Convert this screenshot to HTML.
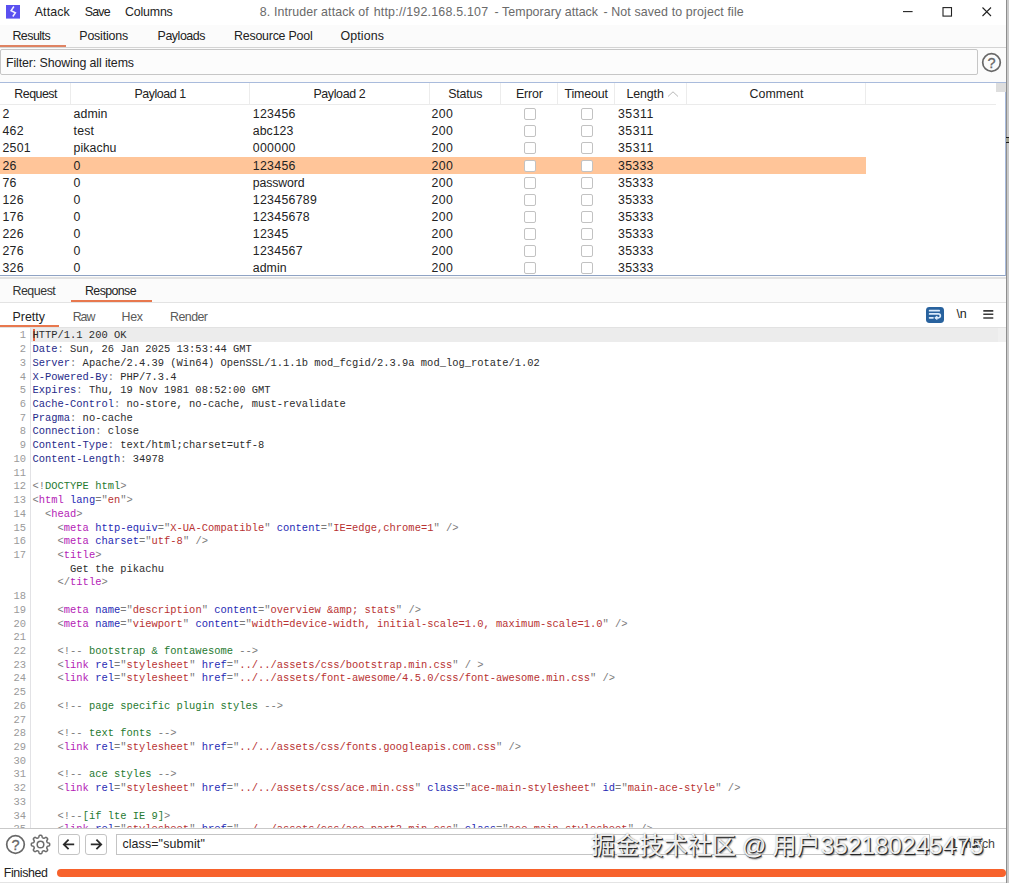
<!DOCTYPE html>
<html lang="en"><head><meta charset="utf-8"><title>Intruder attack</title><style>
html,body{margin:0;padding:0;background:#fff}
#root{position:relative;width:1009px;height:883px;overflow:hidden;background:#fff;font-family:"Liberation Sans",sans-serif}
.b{position:absolute;display:block}
.t{position:absolute;white-space:pre;font-family:"Liberation Sans","Noto Sans CJK SC",sans-serif}
.ln{position:absolute;left:0;width:26px;text-align:right;font:10.45px/13.75px "Liberation Mono",monospace;color:#9a9a9a}
.cl{position:absolute;left:32.5px;margin:0;font:10.45px/13.75px "Liberation Mono",monospace;color:#333;white-space:pre}
.hn{color:#1f2a8a}.p{color:#7a7a7a}.tx{color:#2c2c2c}.tg{color:#b422b6}.at{color:#1f2ab4}.av{color:#b83232}.cm{color:#1f7a30}
.wm{font-size:24px;line-height:30px;color:rgba(255,255,255,.93);text-shadow:1px 1px 0.6px rgba(20,20,20,.85),1.6px 1.6px 1.2px rgba(0,0,0,.4),0 0 1.5px rgba(60,60,60,.55);letter-spacing:.16px}
</style></head><body><div id="root">
<div class="b" style="left:0px;top:0px;width:1009px;height:25px;background:#fff"></div>
<div class="b" style="left:0px;top:25px;width:1009px;height:57px;background:#fbfbfb"></div>
<svg class="b" style="left:5.95px;top:5.05px" width="14" height="13.6" viewBox="0 0 14 13.6"><rect width="14" height="13.6" fill="#5a50f0"/><path d="M7.9 1.5 L5.1 5.6 L9.4 7.8 L6.8 11.5" fill="none" stroke="#f4f2ff" stroke-width="1.5" stroke-linejoin="miter"/></svg>
<div class="t" style="left:34.70px;top:3.94px;font-size:12.4px;line-height:16px;letter-spacing:0.124px;color:#222;">Attack</div>
<div class="t" style="left:84.70px;top:3.94px;font-size:12.4px;line-height:16px;letter-spacing:-0.741px;color:#222;">Save</div>
<div class="t" style="left:124.90px;top:3.94px;font-size:12.4px;line-height:16px;letter-spacing:-0.161px;color:#222;">Columns</div>
<div class="t" style="left:259.80px;top:3.94px;font-size:12.4px;line-height:16px;letter-spacing:0.113px;color:#6a6a6a;">8. Intruder attack of</div>
<div class="t" style="left:373.70px;top:3.94px;font-size:12.4px;line-height:16px;letter-spacing:0.219px;color:#6a6a6a;">http://192.168.5.107</div>
<div class="t" style="left:494.60px;top:3.94px;font-size:12.4px;line-height:16px;letter-spacing:0.064px;color:#6a6a6a;">- Temporary attack</div>
<div class="t" style="left:603.40px;top:3.94px;font-size:12.4px;line-height:16px;letter-spacing:0.124px;color:#6a6a6a;">- Not saved to project file</div>
<svg class="b" style="left:890px;top:0" width="116" height="25" viewBox="0 0 116 25"><g stroke="#222" stroke-width="1.1" fill="none"><path d="M13 11.6 H22.6"/><rect x="53" y="7.6" width="8.5" height="8.5"/><path d="M92.5 7.5 L101 16 M101 7.5 L92.5 16"/></g></svg>
<div class="t" style="left:12.40px;top:28.19px;font-size:12.4px;line-height:16px;letter-spacing:-0.493px;color:#222;">Results</div>
<div class="t" style="left:79.30px;top:28.19px;font-size:12.4px;line-height:16px;letter-spacing:-0.180px;color:#222;">Positions</div>
<div class="t" style="left:157.60px;top:28.19px;font-size:12.4px;line-height:16px;letter-spacing:-0.452px;color:#222;">Payloads</div>
<div class="t" style="left:234.00px;top:28.19px;font-size:12.4px;line-height:16px;letter-spacing:-0.218px;color:#222;">Resource Pool</div>
<div class="t" style="left:340.50px;top:28.19px;font-size:12.4px;line-height:16px;letter-spacing:0.109px;color:#222;">Options</div>
<div class="b" style="left:0px;top:47px;width:1009px;height:1px;background:#d4d4d4"></div>
<div class="b" style="left:0px;top:44.9px;width:65.6px;height:2.3px;background:#df8363"></div>
<div class="b" style="left:0px;top:49px;width:978px;height:26px;box-sizing:border-box;border:1px solid #c6c6c6;border-radius:2px;background:#fcfcfc"></div>
<div class="t" style="left:6.00px;top:55.04px;font-size:12.4px;line-height:16px;letter-spacing:-0.117px;color:#222;">Filter: Showing all items</div>
<svg class="b" style="left:981px;top:52px" width="21" height="21" viewBox="0 0 21 21"><circle cx="10.5" cy="10.5" r="8.8" fill="none" stroke="#686868" stroke-width="1.7"/><text x="10.6" y="15.6" font-size="14.5" font-family="Liberation Sans, sans-serif" text-anchor="middle" fill="#686868" stroke="#686868" stroke-width="0.3">?</text></svg>
<div class="b" style="left:0px;top:82px;width:1006px;height:194px;box-sizing:border-box;background:#fff;border:1px solid #a9bbdc;border-left:none;border-bottom-color:#8fa3c4"></div>
<div class="b" style="left:0px;top:104px;width:996px;height:1px;background:#ebebeb"></div>
<div class="b" style="left:70px;top:83px;width:1px;height:21px;background:#ececec"></div>
<div class="b" style="left:249px;top:83px;width:1px;height:21px;background:#ececec"></div>
<div class="b" style="left:428.5px;top:83px;width:1px;height:21px;background:#ececec"></div>
<div class="b" style="left:500px;top:83px;width:1px;height:21px;background:#ececec"></div>
<div class="b" style="left:557px;top:83px;width:1px;height:21px;background:#ececec"></div>
<div class="b" style="left:614px;top:83px;width:1px;height:21px;background:#ececec"></div>
<div class="b" style="left:686px;top:83px;width:1px;height:21px;background:#ececec"></div>
<div class="b" style="left:865px;top:83px;width:1px;height:21px;background:#ececec"></div>
<div class="t" style="left:14.30px;top:86.44px;font-size:12.4px;line-height:16px;letter-spacing:-0.498px;color:#222;">Request</div>
<div class="t" style="left:134.40px;top:86.44px;font-size:12.4px;line-height:16px;letter-spacing:-0.417px;color:#222;">Payload 1</div>
<div class="t" style="left:313.40px;top:86.44px;font-size:12.4px;line-height:16px;letter-spacing:-0.350px;color:#222;">Payload 2</div>
<div class="t" style="left:448.20px;top:86.44px;font-size:12.4px;line-height:16px;letter-spacing:-0.159px;color:#222;">Status</div>
<div class="t" style="left:516.00px;top:86.44px;font-size:12.4px;line-height:16px;letter-spacing:-0.171px;color:#222;">Error</div>
<div class="t" style="left:564.40px;top:86.44px;font-size:12.4px;line-height:16px;letter-spacing:-0.105px;color:#222;">Timeout</div>
<div class="t" style="left:626.60px;top:86.44px;font-size:12.4px;line-height:16px;letter-spacing:-0.138px;color:#222;">Length</div>
<div class="t" style="left:749.60px;top:86.44px;font-size:12.4px;line-height:16px;letter-spacing:0.022px;color:#222;">Comment</div>
<svg class="b" style="left:667px;top:90px" width="12" height="8" viewBox="0 0 12 8"><path d="M1 6.5 L6 1.8 L11 6.5" fill="none" stroke="#b8b8b8" stroke-width="1"/></svg>
<div class="b" style="left:996px;top:83px;width:9.5px;height:8.5px;background:#dedede"></div>
<div class="t" style="left:2.40px;top:106.24px;font-size:12.3px;line-height:16px;letter-spacing:0.000px;color:#222;letter-spacing:0.309px">2</div>
<div class="t" style="left:73.60px;top:106.24px;font-size:12.3px;line-height:16px;letter-spacing:0.000px;color:#222;letter-spacing:0.060px">admin</div>
<div class="t" style="left:252.80px;top:106.24px;font-size:12.3px;line-height:16px;letter-spacing:0.000px;color:#222;letter-spacing:0.309px">123456</div>
<div class="t" style="left:431.60px;top:106.24px;font-size:12.3px;line-height:16px;letter-spacing:0.000px;color:#222;letter-spacing:0.309px">200</div>
<div class="t" style="left:618.00px;top:106.24px;font-size:12.3px;line-height:16px;letter-spacing:0.000px;color:#222;letter-spacing:0.492px">35311</div>
<div class="b" style="left:524px;top:108.0px;width:12px;height:12px;box-sizing:border-box;border:1px solid #c2c2c2;border-radius:2px;background:#fff"></div>
<div class="b" style="left:581.3px;top:108.0px;width:12px;height:12px;box-sizing:border-box;border:1px solid #c2c2c2;border-radius:2px;background:#fff"></div>
<div class="t" style="left:2.40px;top:123.34px;font-size:12.3px;line-height:16px;letter-spacing:0.000px;color:#222;letter-spacing:0.309px">462</div>
<div class="t" style="left:73.60px;top:123.34px;font-size:12.3px;line-height:16px;letter-spacing:0.000px;color:#222;letter-spacing:0.144px">test</div>
<div class="t" style="left:252.80px;top:123.34px;font-size:12.3px;line-height:16px;letter-spacing:0.000px;color:#222;letter-spacing:0.024px">abc123</div>
<div class="t" style="left:431.60px;top:123.34px;font-size:12.3px;line-height:16px;letter-spacing:0.000px;color:#222;letter-spacing:0.309px">200</div>
<div class="t" style="left:618.00px;top:123.34px;font-size:12.3px;line-height:16px;letter-spacing:0.000px;color:#222;letter-spacing:0.492px">35311</div>
<div class="b" style="left:524px;top:125.0px;width:12px;height:12px;box-sizing:border-box;border:1px solid #c2c2c2;border-radius:2px;background:#fff"></div>
<div class="b" style="left:581.3px;top:125.0px;width:12px;height:12px;box-sizing:border-box;border:1px solid #c2c2c2;border-radius:2px;background:#fff"></div>
<div class="t" style="left:2.40px;top:140.44px;font-size:12.3px;line-height:16px;letter-spacing:0.000px;color:#222;letter-spacing:0.309px">2501</div>
<div class="t" style="left:73.60px;top:140.44px;font-size:12.3px;line-height:16px;letter-spacing:0.000px;color:#222;letter-spacing:0.072px">pikachu</div>
<div class="t" style="left:252.80px;top:140.44px;font-size:12.3px;line-height:16px;letter-spacing:0.000px;color:#222;letter-spacing:0.309px">000000</div>
<div class="t" style="left:431.60px;top:140.44px;font-size:12.3px;line-height:16px;letter-spacing:0.000px;color:#222;letter-spacing:0.309px">200</div>
<div class="t" style="left:618.00px;top:140.44px;font-size:12.3px;line-height:16px;letter-spacing:0.000px;color:#222;letter-spacing:0.492px">35311</div>
<div class="b" style="left:524px;top:142.0px;width:12px;height:12px;box-sizing:border-box;border:1px solid #c2c2c2;border-radius:2px;background:#fff"></div>
<div class="b" style="left:581.3px;top:142.0px;width:12px;height:12px;box-sizing:border-box;border:1px solid #c2c2c2;border-radius:2px;background:#fff"></div>
<div class="b" style="left:0px;top:156.5px;width:866px;height:17.2px;background:#ffc599"></div>
<div class="t" style="left:2.40px;top:157.54px;font-size:12.3px;line-height:16px;letter-spacing:0.000px;color:#222;letter-spacing:0.309px">26</div>
<div class="t" style="left:73.60px;top:157.54px;font-size:12.3px;line-height:16px;letter-spacing:0.000px;color:#222;letter-spacing:0.309px">0</div>
<div class="t" style="left:252.80px;top:157.54px;font-size:12.3px;line-height:16px;letter-spacing:0.000px;color:#222;letter-spacing:0.309px">123456</div>
<div class="t" style="left:431.60px;top:157.54px;font-size:12.3px;line-height:16px;letter-spacing:0.000px;color:#222;letter-spacing:0.309px">200</div>
<div class="t" style="left:618.00px;top:157.54px;font-size:12.3px;line-height:16px;letter-spacing:0.000px;color:#222;letter-spacing:0.309px">35333</div>
<div class="b" style="left:524px;top:159.5px;width:12px;height:12px;box-sizing:border-box;border:1px solid #c2c2c2;border-radius:2px;background:#fff"></div>
<div class="b" style="left:581.3px;top:159.5px;width:12px;height:12px;box-sizing:border-box;border:1px solid #c2c2c2;border-radius:2px;background:#fff"></div>
<div class="t" style="left:2.40px;top:174.64px;font-size:12.3px;line-height:16px;letter-spacing:0.000px;color:#222;letter-spacing:0.309px">76</div>
<div class="t" style="left:73.60px;top:174.64px;font-size:12.3px;line-height:16px;letter-spacing:0.000px;color:#222;letter-spacing:0.309px">0</div>
<div class="t" style="left:252.80px;top:174.64px;font-size:12.3px;line-height:16px;letter-spacing:0.000px;color:#222;letter-spacing:-0.130px">password</div>
<div class="t" style="left:431.60px;top:174.64px;font-size:12.3px;line-height:16px;letter-spacing:0.000px;color:#222;letter-spacing:0.309px">200</div>
<div class="t" style="left:618.00px;top:174.64px;font-size:12.3px;line-height:16px;letter-spacing:0.000px;color:#222;letter-spacing:0.309px">35333</div>
<div class="b" style="left:524px;top:176.5px;width:12px;height:12px;box-sizing:border-box;border:1px solid #c2c2c2;border-radius:2px;background:#fff"></div>
<div class="b" style="left:581.3px;top:176.5px;width:12px;height:12px;box-sizing:border-box;border:1px solid #c2c2c2;border-radius:2px;background:#fff"></div>
<div class="t" style="left:2.40px;top:191.74px;font-size:12.3px;line-height:16px;letter-spacing:0.000px;color:#222;letter-spacing:0.309px">126</div>
<div class="t" style="left:73.60px;top:191.74px;font-size:12.3px;line-height:16px;letter-spacing:0.000px;color:#222;letter-spacing:0.309px">0</div>
<div class="t" style="left:252.80px;top:191.74px;font-size:12.3px;line-height:16px;letter-spacing:0.000px;color:#222;letter-spacing:0.309px">123456789</div>
<div class="t" style="left:431.60px;top:191.74px;font-size:12.3px;line-height:16px;letter-spacing:0.000px;color:#222;letter-spacing:0.309px">200</div>
<div class="t" style="left:618.00px;top:191.74px;font-size:12.3px;line-height:16px;letter-spacing:0.000px;color:#222;letter-spacing:0.309px">35333</div>
<div class="b" style="left:524px;top:193.5px;width:12px;height:12px;box-sizing:border-box;border:1px solid #c2c2c2;border-radius:2px;background:#fff"></div>
<div class="b" style="left:581.3px;top:193.5px;width:12px;height:12px;box-sizing:border-box;border:1px solid #c2c2c2;border-radius:2px;background:#fff"></div>
<div class="t" style="left:2.40px;top:208.84px;font-size:12.3px;line-height:16px;letter-spacing:0.000px;color:#222;letter-spacing:0.309px">176</div>
<div class="t" style="left:73.60px;top:208.84px;font-size:12.3px;line-height:16px;letter-spacing:0.000px;color:#222;letter-spacing:0.309px">0</div>
<div class="t" style="left:252.80px;top:208.84px;font-size:12.3px;line-height:16px;letter-spacing:0.000px;color:#222;letter-spacing:0.309px">12345678</div>
<div class="t" style="left:431.60px;top:208.84px;font-size:12.3px;line-height:16px;letter-spacing:0.000px;color:#222;letter-spacing:0.309px">200</div>
<div class="t" style="left:618.00px;top:208.84px;font-size:12.3px;line-height:16px;letter-spacing:0.000px;color:#222;letter-spacing:0.309px">35333</div>
<div class="b" style="left:524px;top:210.5px;width:12px;height:12px;box-sizing:border-box;border:1px solid #c2c2c2;border-radius:2px;background:#fff"></div>
<div class="b" style="left:581.3px;top:210.5px;width:12px;height:12px;box-sizing:border-box;border:1px solid #c2c2c2;border-radius:2px;background:#fff"></div>
<div class="t" style="left:2.40px;top:225.94px;font-size:12.3px;line-height:16px;letter-spacing:0.000px;color:#222;letter-spacing:0.309px">226</div>
<div class="t" style="left:73.60px;top:225.94px;font-size:12.3px;line-height:16px;letter-spacing:0.000px;color:#222;letter-spacing:0.309px">0</div>
<div class="t" style="left:252.80px;top:225.94px;font-size:12.3px;line-height:16px;letter-spacing:0.000px;color:#222;letter-spacing:0.309px">12345</div>
<div class="t" style="left:431.60px;top:225.94px;font-size:12.3px;line-height:16px;letter-spacing:0.000px;color:#222;letter-spacing:0.309px">200</div>
<div class="t" style="left:618.00px;top:225.94px;font-size:12.3px;line-height:16px;letter-spacing:0.000px;color:#222;letter-spacing:0.309px">35333</div>
<div class="b" style="left:524px;top:227.5px;width:12px;height:12px;box-sizing:border-box;border:1px solid #c2c2c2;border-radius:2px;background:#fff"></div>
<div class="b" style="left:581.3px;top:227.5px;width:12px;height:12px;box-sizing:border-box;border:1px solid #c2c2c2;border-radius:2px;background:#fff"></div>
<div class="t" style="left:2.40px;top:243.04px;font-size:12.3px;line-height:16px;letter-spacing:0.000px;color:#222;letter-spacing:0.309px">276</div>
<div class="t" style="left:73.60px;top:243.04px;font-size:12.3px;line-height:16px;letter-spacing:0.000px;color:#222;letter-spacing:0.309px">0</div>
<div class="t" style="left:252.80px;top:243.04px;font-size:12.3px;line-height:16px;letter-spacing:0.000px;color:#222;letter-spacing:0.309px">1234567</div>
<div class="t" style="left:431.60px;top:243.04px;font-size:12.3px;line-height:16px;letter-spacing:0.000px;color:#222;letter-spacing:0.309px">200</div>
<div class="t" style="left:618.00px;top:243.04px;font-size:12.3px;line-height:16px;letter-spacing:0.000px;color:#222;letter-spacing:0.309px">35333</div>
<div class="b" style="left:524px;top:245.0px;width:12px;height:12px;box-sizing:border-box;border:1px solid #c2c2c2;border-radius:2px;background:#fff"></div>
<div class="b" style="left:581.3px;top:245.0px;width:12px;height:12px;box-sizing:border-box;border:1px solid #c2c2c2;border-radius:2px;background:#fff"></div>
<div class="t" style="left:2.40px;top:260.14px;font-size:12.3px;line-height:16px;letter-spacing:0.000px;color:#222;letter-spacing:0.309px">326</div>
<div class="t" style="left:73.60px;top:260.14px;font-size:12.3px;line-height:16px;letter-spacing:0.000px;color:#222;letter-spacing:0.309px">0</div>
<div class="t" style="left:252.80px;top:260.14px;font-size:12.3px;line-height:16px;letter-spacing:0.000px;color:#222;letter-spacing:0.060px">admin</div>
<div class="t" style="left:431.60px;top:260.14px;font-size:12.3px;line-height:16px;letter-spacing:0.000px;color:#222;letter-spacing:0.309px">200</div>
<div class="t" style="left:618.00px;top:260.14px;font-size:12.3px;line-height:16px;letter-spacing:0.000px;color:#222;letter-spacing:0.309px">35333</div>
<div class="b" style="left:524px;top:262.0px;width:12px;height:12px;box-sizing:border-box;border:1px solid #c2c2c2;border-radius:2px;background:#fff"></div>
<div class="b" style="left:581.3px;top:262.0px;width:12px;height:12px;box-sizing:border-box;border:1px solid #c2c2c2;border-radius:2px;background:#fff"></div>
<div class="b" style="left:0px;top:276px;width:1006px;height:26px;background:#fbfbfb"></div>
<div class="b" style="left:0px;top:277.2px;width:1006px;height:1.5px;background:#e2e2e2"></div>
<div class="t" style="left:12.40px;top:282.94px;font-size:12.4px;line-height:16px;letter-spacing:-0.455px;color:#333;">Request</div>
<div class="t" style="left:85.00px;top:282.94px;font-size:12.4px;line-height:16px;letter-spacing:-0.605px;color:#222;">Response</div>
<div class="b" style="left:0px;top:302px;width:1006px;height:1px;background:#e3e3e3"></div>
<div class="b" style="left:71px;top:299.5px;width:80.5px;height:2.2px;background:#e8784e"></div>
<div class="b" style="left:0px;top:303px;width:1006px;height:24px;background:#fff"></div>
<div class="t" style="left:12.40px;top:308.54px;font-size:12.4px;line-height:16px;letter-spacing:0.052px;color:#222;">Pretty</div>
<div class="t" style="left:72.70px;top:308.54px;font-size:12.4px;line-height:16px;letter-spacing:-1.069px;color:#5a5a5a;">Raw</div>
<div class="t" style="left:121.60px;top:308.54px;font-size:12.4px;line-height:16px;letter-spacing:-0.384px;color:#5a5a5a;">Hex</div>
<div class="t" style="left:170.00px;top:308.54px;font-size:12.4px;line-height:16px;letter-spacing:-0.529px;color:#5a5a5a;">Render</div>
<div class="b" style="left:0px;top:326.6px;width:1006px;height:1px;background:#e2e2e2"></div>
<div class="b" style="left:0px;top:325.3px;width:59px;height:2.2px;background:#e8784e"></div>
<svg class="b" style="left:925.7px;top:306.8px" width="18" height="16" viewBox="0 0 18 16"><rect width="18" height="16" rx="3.4" fill="#28629e"/><g fill="none" stroke="#dcecfb" stroke-width="1.7" stroke-linecap="round"><path d="M3.6 3.7 H13.2"/><path d="M3.6 6.95 H12.4 a1.93 1.93 0 0 1 0 3.86 H10"/><path d="M3.6 10.8 H7"/><path d="M10.9 9.5 L9.4 10.8 L10.9 12.1" stroke-width="1.4"/></g></svg>
<div class="t" style="left:956.40px;top:306.14px;font-size:12.5px;line-height:16px;letter-spacing:-0.112px;color:#222;">\n</div>
<svg class="b" style="left:983px;top:309px" width="11" height="11" viewBox="0 0 11 11"><g stroke="#3a3a3a" stroke-width="1.6"><path d="M0.3 1.9 H10.3 M0.3 5.3 H10.3 M0.3 9.0 H10.3"/></g></svg>
<div class="b" style="left:0px;top:327.6px;width:1006px;height:500.9px;background:#fff"></div>
<div class="b" style="left:31px;top:327.6px;width:967px;height:14px;background:#ececec"></div>
<div class="b" style="left:30px;top:327.6px;width:1px;height:500.9px;background:#e2e2e5"></div>
<div class="b" style="left:998px;top:327.6px;width:8px;height:14.6px;background:#f0f0f0"></div>
<div class="b" style="left:33px;top:328.6px;width:1.5px;height:12.8px;background:#e8643c"></div>
<div class="b" style="left:0;top:327.6px;width:1006px;height:500.9px;overflow:hidden">
<div class="ln" style="top:1.85px">1</div><pre class="cl" style="top:1.85px"><span class="tx">HTTP/1.1 200 OK</span></pre>
<div class="ln" style="top:15.57px">2</div><pre class="cl" style="top:15.57px"><span class="hn">Date</span><span class="p">:</span><span class="tx"> Sun, 26 Jan 2025 13:53:44 GMT</span></pre>
<div class="ln" style="top:29.29px">3</div><pre class="cl" style="top:29.29px"><span class="hn">Server</span><span class="p">:</span><span class="tx"> Apache/2.4.39 (Win64) OpenSSL/1.1.1b mod_fcgid/2.3.9a mod_log_rotate/1.02</span></pre>
<div class="ln" style="top:43.01px">4</div><pre class="cl" style="top:43.01px"><span class="hn">X-Powered-By</span><span class="p">:</span><span class="tx"> PHP/7.3.4</span></pre>
<div class="ln" style="top:56.73px">5</div><pre class="cl" style="top:56.73px"><span class="hn">Expires</span><span class="p">:</span><span class="tx"> Thu, 19 Nov 1981 08:52:00 GMT</span></pre>
<div class="ln" style="top:70.45px">6</div><pre class="cl" style="top:70.45px"><span class="hn">Cache-Control</span><span class="p">:</span><span class="tx"> no-store, no-cache, must-revalidate</span></pre>
<div class="ln" style="top:84.17px">7</div><pre class="cl" style="top:84.17px"><span class="hn">Pragma</span><span class="p">:</span><span class="tx"> no-cache</span></pre>
<div class="ln" style="top:97.89px">8</div><pre class="cl" style="top:97.89px"><span class="hn">Connection</span><span class="p">:</span><span class="tx"> close</span></pre>
<div class="ln" style="top:111.61px">9</div><pre class="cl" style="top:111.61px"><span class="hn">Content-Type</span><span class="p">:</span><span class="tx"> text/html;charset=utf-8</span></pre>
<div class="ln" style="top:125.33px">10</div><pre class="cl" style="top:125.33px"><span class="hn">Content-Length</span><span class="p">:</span><span class="tx"> 34978</span></pre>
<div class="ln" style="top:139.05px">11</div><pre class="cl" style="top:139.05px"></pre>
<div class="ln" style="top:152.77px">12</div><pre class="cl" style="top:152.77px"><span class="p">&lt;!</span><span class="cm">DOCTYPE html</span><span class="p">&gt;</span></pre>
<div class="ln" style="top:166.49px">13</div><pre class="cl" style="top:166.49px"><span class="p">&lt;</span><span class="tg">html</span> <span class="at">lang</span><span class="p">=</span><span class="p">"</span><span class="av">en</span><span class="p">"</span><span class="p">&gt;</span></pre>
<div class="ln" style="top:180.21px">14</div><pre class="cl" style="top:180.21px">  <span class="p">&lt;</span><span class="tg">head</span><span class="p">&gt;</span></pre>
<div class="ln" style="top:193.93px">15</div><pre class="cl" style="top:193.93px">    <span class="p">&lt;</span><span class="tg">meta</span> <span class="at">http-equiv</span><span class="p">=</span><span class="p">"</span><span class="av">X-UA-Compatible</span><span class="p">"</span> <span class="at">content</span><span class="p">=</span><span class="p">"</span><span class="av">IE=edge,chrome=1</span><span class="p">"</span><span class="p"> /&gt;</span></pre>
<div class="ln" style="top:207.65px">16</div><pre class="cl" style="top:207.65px">    <span class="p">&lt;</span><span class="tg">meta</span> <span class="at">charset</span><span class="p">=</span><span class="p">"</span><span class="av">utf-8</span><span class="p">"</span><span class="p"> /&gt;</span></pre>
<div class="ln" style="top:221.37px">17</div><pre class="cl" style="top:221.37px">    <span class="p">&lt;</span><span class="tg">title</span><span class="p">&gt;</span></pre>
<div class="ln" style="top:235.09px"></div><pre class="cl" style="top:235.09px">      <span class="tx">Get the pikachu</span></pre>
<div class="ln" style="top:248.81px"></div><pre class="cl" style="top:248.81px">    <span class="p">&lt;/</span><span class="tg">title</span><span class="p">&gt;</span></pre>
<div class="ln" style="top:262.53px">18</div><pre class="cl" style="top:262.53px"></pre>
<div class="ln" style="top:276.25px">19</div><pre class="cl" style="top:276.25px">    <span class="p">&lt;</span><span class="tg">meta</span> <span class="at">name</span><span class="p">=</span><span class="p">"</span><span class="av">description</span><span class="p">"</span> <span class="at">content</span><span class="p">=</span><span class="p">"</span><span class="av">overview &amp;amp; stats</span><span class="p">"</span><span class="p"> /&gt;</span></pre>
<div class="ln" style="top:289.97px">20</div><pre class="cl" style="top:289.97px">    <span class="p">&lt;</span><span class="tg">meta</span> <span class="at">name</span><span class="p">=</span><span class="p">"</span><span class="av">viewport</span><span class="p">"</span> <span class="at">content</span><span class="p">=</span><span class="p">"</span><span class="av">width=device-width, initial-scale=1.0, maximum-scale=1.0</span><span class="p">"</span><span class="p"> /&gt;</span></pre>
<div class="ln" style="top:303.69px">21</div><pre class="cl" style="top:303.69px"></pre>
<div class="ln" style="top:317.41px">22</div><pre class="cl" style="top:317.41px">    <span class="p">&lt;!--</span><span class="cm"> bootstrap &amp; fontawesome </span><span class="p">--&gt;</span></pre>
<div class="ln" style="top:331.13px">23</div><pre class="cl" style="top:331.13px">    <span class="p">&lt;</span><span class="tg">link</span> <span class="at">rel</span><span class="p">=</span><span class="p">"</span><span class="av">stylesheet</span><span class="p">"</span> <span class="at">href</span><span class="p">=</span><span class="p">"</span><span class="av">../../assets/css/bootstrap.min.css</span><span class="p">"</span><span class="p"> / &gt;</span></pre>
<div class="ln" style="top:344.85px">24</div><pre class="cl" style="top:344.85px">    <span class="p">&lt;</span><span class="tg">link</span> <span class="at">rel</span><span class="p">=</span><span class="p">"</span><span class="av">stylesheet</span><span class="p">"</span> <span class="at">href</span><span class="p">=</span><span class="p">"</span><span class="av">../../assets/font-awesome/4.5.0/css/font-awesome.min.css</span><span class="p">"</span><span class="p"> /&gt;</span></pre>
<div class="ln" style="top:358.57px">25</div><pre class="cl" style="top:358.57px"></pre>
<div class="ln" style="top:372.29px">26</div><pre class="cl" style="top:372.29px">    <span class="p">&lt;!--</span><span class="cm"> page specific plugin styles </span><span class="p">--&gt;</span></pre>
<div class="ln" style="top:386.01px">27</div><pre class="cl" style="top:386.01px"></pre>
<div class="ln" style="top:399.73px">28</div><pre class="cl" style="top:399.73px">    <span class="p">&lt;!--</span><span class="cm"> text fonts </span><span class="p">--&gt;</span></pre>
<div class="ln" style="top:413.45px">29</div><pre class="cl" style="top:413.45px">    <span class="p">&lt;</span><span class="tg">link</span> <span class="at">rel</span><span class="p">=</span><span class="p">"</span><span class="av">stylesheet</span><span class="p">"</span> <span class="at">href</span><span class="p">=</span><span class="p">"</span><span class="av">../../assets/css/fonts.googleapis.com.css</span><span class="p">"</span><span class="p"> /&gt;</span></pre>
<div class="ln" style="top:427.17px">30</div><pre class="cl" style="top:427.17px"></pre>
<div class="ln" style="top:440.89px">31</div><pre class="cl" style="top:440.89px">    <span class="p">&lt;!--</span><span class="cm"> ace styles </span><span class="p">--&gt;</span></pre>
<div class="ln" style="top:454.61px">32</div><pre class="cl" style="top:454.61px">    <span class="p">&lt;</span><span class="tg">link</span> <span class="at">rel</span><span class="p">=</span><span class="p">"</span><span class="av">stylesheet</span><span class="p">"</span> <span class="at">href</span><span class="p">=</span><span class="p">"</span><span class="av">../../assets/css/ace.min.css</span><span class="p">"</span> <span class="at">class</span><span class="p">=</span><span class="p">"</span><span class="av">ace-main-stylesheet</span><span class="p">"</span> <span class="at">id</span><span class="p">=</span><span class="p">"</span><span class="av">main-ace-style</span><span class="p">"</span><span class="p"> /&gt;</span></pre>
<div class="ln" style="top:468.33px">33</div><pre class="cl" style="top:468.33px"></pre>
<div class="ln" style="top:482.05px">34</div><pre class="cl" style="top:482.05px">    <span class="p">&lt;!--</span><span class="cm">[if lte IE 9]</span><span class="p">&gt;</span></pre>
<div class="ln" style="top:495.77px">35</div><pre class="cl" style="top:495.77px">    <span class="p">&lt;</span><span class="tg">link</span> <span class="at">rel</span><span class="p">=</span><span class="p">"</span><span class="av">stylesheet</span><span class="p">"</span> <span class="at">href</span><span class="p">=</span><span class="p">"</span><span class="av">../../assets/css/ace-part2.min.css</span><span class="p">"</span> <span class="at">class</span><span class="p">=</span><span class="p">"</span><span class="av">ace-main-stylesheet</span><span class="p">"</span><span class="p"> /&gt;</span></pre>
</div>
<div class="b" style="left:0px;top:828px;width:1006px;height:1.2px;background:#c9c9c9"></div>
<div class="b" style="left:0px;top:829.2px;width:1006px;height:32px;background:#fff"></div>
<svg class="b" style="left:5px;top:833.5px" width="21" height="21" viewBox="0 0 21 21"><circle cx="10.5" cy="10.5" r="8.8" fill="none" stroke="#686868" stroke-width="1.7"/><text x="10.6" y="15.6" font-size="14.5" font-family="Liberation Sans, sans-serif" text-anchor="middle" fill="#686868" stroke="#686868" stroke-width="0.3">?</text></svg>
<svg class="b" style="left:30px;top:833.6px" width="21" height="21" viewBox="0 0 21 21"><path d="M19.70 10.50 L19.69 10.74 L19.67 10.98 L19.64 11.22 L19.56 11.45 L19.43 11.68 L19.16 11.87 L18.71 12.02 L18.17 12.13 L17.73 12.24 L17.45 12.36 L17.29 12.51 L17.19 12.67 L17.11 12.84 L17.04 13.01 L16.97 13.18 L16.90 13.35 L16.83 13.52 L16.77 13.69 L16.73 13.88 L16.73 14.10 L16.84 14.38 L17.08 14.77 L17.39 15.23 L17.59 15.65 L17.64 15.98 L17.58 16.24 L17.47 16.45 L17.33 16.65 L17.17 16.83 L17.01 17.01 L16.83 17.17 L16.65 17.33 L16.45 17.47 L16.24 17.58 L15.98 17.64 L15.65 17.59 L15.23 17.39 L14.77 17.08 L14.38 16.84 L14.10 16.73 L13.88 16.73 L13.69 16.77 L13.52 16.83 L13.35 16.90 L13.18 16.97 L13.01 17.04 L12.84 17.11 L12.67 17.19 L12.51 17.29 L12.36 17.45 L12.24 17.73 L12.13 18.17 L12.02 18.71 L11.87 19.16 L11.68 19.43 L11.45 19.56 L11.22 19.64 L10.98 19.67 L10.74 19.69 L10.50 19.70 L10.26 19.69 L10.02 19.67 L9.78 19.64 L9.55 19.56 L9.32 19.43 L9.13 19.16 L8.98 18.71 L8.87 18.17 L8.76 17.73 L8.64 17.45 L8.49 17.29 L8.33 17.19 L8.16 17.11 L7.99 17.04 L7.82 16.97 L7.65 16.90 L7.48 16.83 L7.31 16.77 L7.12 16.73 L6.90 16.73 L6.62 16.84 L6.23 17.08 L5.77 17.39 L5.35 17.59 L5.02 17.64 L4.76 17.58 L4.55 17.47 L4.35 17.33 L4.17 17.17 L3.99 17.01 L3.83 16.83 L3.67 16.65 L3.53 16.45 L3.42 16.24 L3.36 15.98 L3.41 15.65 L3.61 15.23 L3.92 14.77 L4.16 14.38 L4.27 14.10 L4.27 13.88 L4.23 13.69 L4.17 13.52 L4.10 13.35 L4.03 13.18 L3.96 13.01 L3.89 12.84 L3.81 12.67 L3.71 12.51 L3.55 12.36 L3.27 12.24 L2.83 12.13 L2.29 12.02 L1.84 11.87 L1.57 11.68 L1.44 11.45 L1.36 11.22 L1.33 10.98 L1.31 10.74 L1.30 10.50 L1.31 10.26 L1.33 10.02 L1.36 9.78 L1.44 9.55 L1.57 9.32 L1.84 9.13 L2.29 8.98 L2.83 8.87 L3.27 8.76 L3.55 8.64 L3.71 8.49 L3.81 8.33 L3.89 8.16 L3.96 7.99 L4.03 7.82 L4.10 7.65 L4.17 7.48 L4.23 7.31 L4.27 7.12 L4.27 6.90 L4.16 6.62 L3.92 6.23 L3.61 5.77 L3.41 5.35 L3.36 5.02 L3.42 4.76 L3.53 4.55 L3.67 4.35 L3.83 4.17 L3.99 3.99 L4.17 3.83 L4.35 3.67 L4.55 3.53 L4.76 3.42 L5.02 3.36 L5.35 3.41 L5.77 3.61 L6.23 3.92 L6.62 4.16 L6.90 4.27 L7.12 4.27 L7.31 4.23 L7.48 4.17 L7.65 4.10 L7.82 4.03 L7.99 3.96 L8.16 3.89 L8.33 3.81 L8.49 3.71 L8.64 3.55 L8.76 3.27 L8.87 2.83 L8.98 2.29 L9.13 1.84 L9.32 1.57 L9.55 1.44 L9.78 1.36 L10.02 1.33 L10.26 1.31 L10.50 1.30 L10.74 1.31 L10.98 1.33 L11.22 1.36 L11.45 1.44 L11.68 1.57 L11.87 1.84 L12.02 2.29 L12.13 2.83 L12.24 3.27 L12.36 3.55 L12.51 3.71 L12.67 3.81 L12.84 3.89 L13.01 3.96 L13.18 4.03 L13.35 4.10 L13.52 4.17 L13.69 4.23 L13.88 4.27 L14.10 4.27 L14.38 4.16 L14.77 3.92 L15.23 3.61 L15.65 3.41 L15.98 3.36 L16.24 3.42 L16.45 3.53 L16.65 3.67 L16.83 3.83 L17.01 3.99 L17.17 4.17 L17.33 4.35 L17.47 4.55 L17.58 4.76 L17.64 5.02 L17.59 5.35 L17.39 5.77 L17.08 6.23 L16.84 6.62 L16.73 6.90 L16.73 7.12 L16.77 7.31 L16.83 7.48 L16.90 7.65 L16.97 7.82 L17.04 7.99 L17.11 8.16 L17.19 8.33 L17.29 8.49 L17.45 8.64 L17.73 8.76 L18.17 8.87 L18.71 8.98 L19.16 9.13 L19.43 9.32 L19.56 9.55 L19.64 9.78 L19.67 10.02 L19.69 10.26 Z" fill="none" stroke="#6c6c6c" stroke-width="1.5" stroke-linejoin="round"/><circle cx="10.5" cy="10.5" r="3.3" fill="none" stroke="#6c6c6c" stroke-width="1.5"/></svg>
<svg class="b" style="left:58px;top:833.5px" width="22" height="21" viewBox="0 0 22 21"><rect x="0.5" y="0.5" width="21" height="20" rx="2.5" fill="#fff" stroke="#c4c4c4"/><path d="M16.2 10.4 H6 M10.6 5.6 L5.8 10.4 L10.6 15.2" fill="none" stroke="#2a2a2a" stroke-width="1.8"/></svg>
<svg class="b" style="left:84.7px;top:833.5px" width="22" height="21" viewBox="0 0 22 21"><rect x="0.5" y="0.5" width="21" height="20" rx="2.5" fill="#fff" stroke="#c4c4c4"/><path d="M5.8 10.4 H16 M11.4 5.6 L16.2 10.4 L11.4 15.2" fill="none" stroke="#2a2a2a" stroke-width="1.8"/></svg>
<div class="b" style="left:116px;top:834px;width:814px;height:21px;box-sizing:border-box;border:1px solid #c4c4c4;background:#fff"></div>
<div class="t" style="left:122.40px;top:836.44px;font-size:12.4px;line-height:16px;letter-spacing:0.127px;color:#222;">class=&quot;submit&quot;</div>
<div class="t" style="left:951.00px;top:836.44px;font-size:12.4px;line-height:16px;letter-spacing:-0.016px;color:#444;">1 match</div>
<div class="t wm" style="left:591.2px;top:831.2px;letter-spacing:.18px">掘金技术社区</div>
<div class="t wm" style="left:741.9px;top:831.2px;font-size:24px;letter-spacing:0">@</div>
<div class="t wm" style="left:772.4px;top:831.2px;letter-spacing:.21px">用户352180245475</div>
<div class="b" style="left:0px;top:861px;width:1006px;height:22px;background:#fff"></div>
<div class="t" style="left:3.80px;top:864.74px;font-size:12.4px;line-height:16px;letter-spacing:-0.396px;color:#222;">Finished</div>
<div class="b" style="left:56.7px;top:868.5px;width:949px;height:8.6px;background:#f7622c;border-radius:4.3px"></div>
<div class="b" style="left:0px;top:881.5px;width:1009px;height:1.5px;background:#e4e4e4"></div>
<div class="b" style="left:1006px;top:0px;width:1.2px;height:883px;background:#8e8e8e"></div>
<div class="b" style="left:1007.2px;top:0px;width:1.8px;height:883px;background:#cbcbcb"></div>
<div class="b" style="left:1006px;top:137px;width:3px;height:5.8px;background:#a0a090;border-top:1.3px solid #1c1c1c;border-bottom:1.3px solid #1c1c1c;box-sizing:border-box"></div>
</div></body></html>
